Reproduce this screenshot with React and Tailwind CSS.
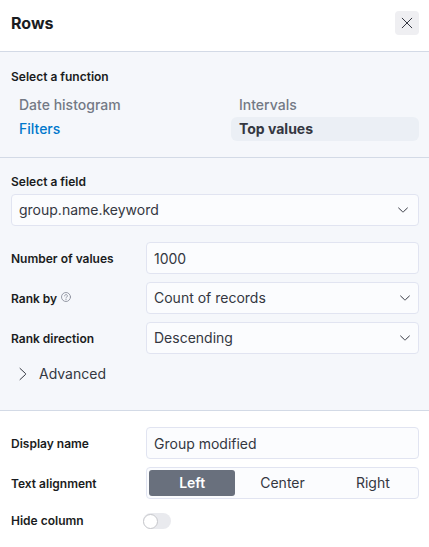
import React, { useState } from "react";
import clsx from "clsx";

const fieldClass =
  "h-8 w-full rounded border border-[#e1e4f1] bg-[#fbfcfe] px-[7px] text-sm text-[#343741] outline-none focus:border-[#0077cc]";

const CrossIcon = () => (
  <svg width="16" height="16" viewBox="0 0 16 16" fill="none" stroke="currentColor" strokeWidth="1" strokeLinecap="round" aria-hidden="true">
    <path d="M3.2 3.2l9.6 9.6M12.8 3.2l-9.6 9.6" />
  </svg>
);

const ChevronDown = ({ className }) => (
  <svg className={className} width="16" height="16" viewBox="0 0 16 16" fill="none" stroke="currentColor" strokeWidth="1" strokeLinecap="round" strokeLinejoin="round" aria-hidden="true">
    <path d="M3.6 6l3.9 3.7a.7.7 0 0 0 1 0L12.4 6" />
  </svg>
);

const ChevronRight = () => (
  <svg width="16" height="16" viewBox="0 0 16 16" fill="none" stroke="currentColor" strokeWidth="1" strokeLinecap="round" strokeLinejoin="round" aria-hidden="true">
    <path d="M5 2.4l5.6 5.2a.6.6 0 0 1 0 .8L5 13.6" />
  </svg>
);

const HelpIcon = () => (
  <svg width="10" height="10" viewBox="0 0 16 16" fill="none" stroke="currentColor" strokeWidth="1.4" strokeLinecap="round" aria-hidden="true">
    <circle cx="8" cy="8" r="7.2" />
    <path d="M5.8 6.2a2.2 2.2 0 1 1 3.4 1.8C8.4 8.5 8 8.9 8 9.7" />
    <path d="M8 11.9v.2" strokeWidth="1.8" />
  </svg>
);

const Select = ({ id, options, iconClass = "right-[6px]" }) => (
  <div className="relative w-full">
    <select id={id} className={clsx(fieldClass, "appearance-none pr-8")}>
      {options.map((option) => (
        <option key={option}>{option}</option>
      ))}
    </select>
    <ChevronDown className={clsx("pointer-events-none absolute top-2 text-[#343741]", iconClass)} />
  </div>
);

const Row = ({ id, label, hint, children }) => (
  <div className="grid grid-cols-[135px_1fr] items-center">
    <div className="flex items-center gap-1 pt-[2px]">
      <label id={`${id}-label`} htmlFor={id} className="text-xs font-semibold">
        {label}
      </label>
      {hint}
    </div>
    {children}
  </div>
);

const App = () => {
  const [alignment, setAlignment] = useState("Left");
  const [hidden, setHidden] = useState(false);

  return (
    <div className="bg-white font-[Inter,sans-serif] text-[#1a1c21]">
      {/* Header */}
      <header className="flex items-center justify-between border-b border-[#d3dae6] pt-[11px] pr-[10px] pb-4 pl-[11px]">
        <h2 className="text-base font-bold">Rows</h2>
        <button type="button" aria-label="Close" className="flex size-6 items-center justify-center rounded bg-[#efeff2] text-[#343741]">
          <CrossIcon />
        </button>
      </header>

      {/* Functions */}
      <section className="border-b border-[#d3dae6] bg-[#f5f7fb] pt-4 pr-[10px] pb-4 pl-[11px]">
        <h3 className="text-xs leading-[18px] font-semibold">Select a function</h3>
        <div className="mt-[7px] grid grid-cols-2 gap-x-8 text-sm">
          <button type="button" disabled className="h-6 rounded-md px-2 text-left font-medium text-[#737985]">
            Date histogram
          </button>
          <button type="button" disabled className="h-6 rounded-md px-2 text-left font-medium text-[#737985]">
            Intervals
          </button>
          <button type="button" className="h-6 rounded-md px-2 text-left font-medium text-[#0077cc]">
            Filters
          </button>
          <button type="button" aria-pressed="true" className="h-6 rounded-md bg-[#ebeff5] px-2 text-left font-bold text-[#343741]">
            Top values
          </button>
        </div>
      </section>

      {/* Field options */}
      <section className="border-b border-[#d3dae6] bg-[#f5f7fb] pt-4 pr-[10px] pb-6 pl-[11px]">
        <label htmlFor="field" className="block pb-1 text-xs font-semibold">
          Select a field
        </label>
        <Select id="field" options={["group.name.keyword"]} iconClass="right-2" />

        <div className="mt-4 flex flex-col gap-2">
          <Row id="values" label="Number of values">
            <input id="values" type="text" inputMode="numeric" defaultValue="1000" className={fieldClass} />
          </Row>
          <Row
            id="rank-by"
            label="Rank by"
            hint={
              <span className="pb-1 text-[#8a8f9b]">
                <HelpIcon />
              </span>
            }
          >
            <Select id="rank-by" options={["Count of records", "Alphabetical"]} />
          </Row>
          <Row id="direction" label="Rank direction">
            <Select id="direction" options={["Descending", "Ascending"]} />
          </Row>
        </div>

        <button type="button" aria-expanded="false" className="mt-2 flex h-6 items-center gap-2 pl-1 text-sm text-[#343741]">
          <ChevronRight />
          Advanced
        </button>
      </section>

      {/* Appearance */}
      <section className="flex flex-col gap-2 pt-4 pr-[10px] pb-4 pl-[11px]">
        <Row id="name" label="Display name">
          <input id="name" type="text" defaultValue="Group modified" className={fieldClass} />
        </Row>
        <div className="grid grid-cols-[135px_1fr] items-center">
          <span id="alignment-label" className="pt-[2px] text-xs font-semibold">
            Text alignment
          </span>
          <div role="group" aria-labelledby="alignment-label" className="grid h-8 grid-cols-3 gap-1 rounded border border-[#e1e4f1] bg-[#fbfcfe] p-[2px]">
            {["Left", "Center", "Right"].map((option) => (
              <button
                key={option}
                type="button"
                aria-pressed={alignment === option}
                onClick={() => setAlignment(option)}
                className={clsx(
                  "rounded-[3px] text-sm",
                  alignment === option ? "bg-[#69707d] font-semibold text-white" : "text-[#343741]"
                )}
              >
                {option}
              </button>
            ))}
          </div>
        </div>
        <div className="mt-[6px] grid grid-cols-[132px_1fr] items-center">
          <label htmlFor="hide-column" className="text-xs font-semibold">
            Hide column
          </label>
          <input
            id="hide-column"
            type="checkbox"
            role="switch"
            checked={hidden}
            onChange={(e) => setHidden(e.target.checked)}
            className="flex h-4 w-7 appearance-none items-center rounded-full bg-[#e9eaee] before:size-[15px] before:rounded-full before:border before:border-[#c6c7cb] before:bg-white checked:justify-end checked:bg-[#0077cc]"
          />
        </div>
      </section>
    </div>
  );
};

export default App;
